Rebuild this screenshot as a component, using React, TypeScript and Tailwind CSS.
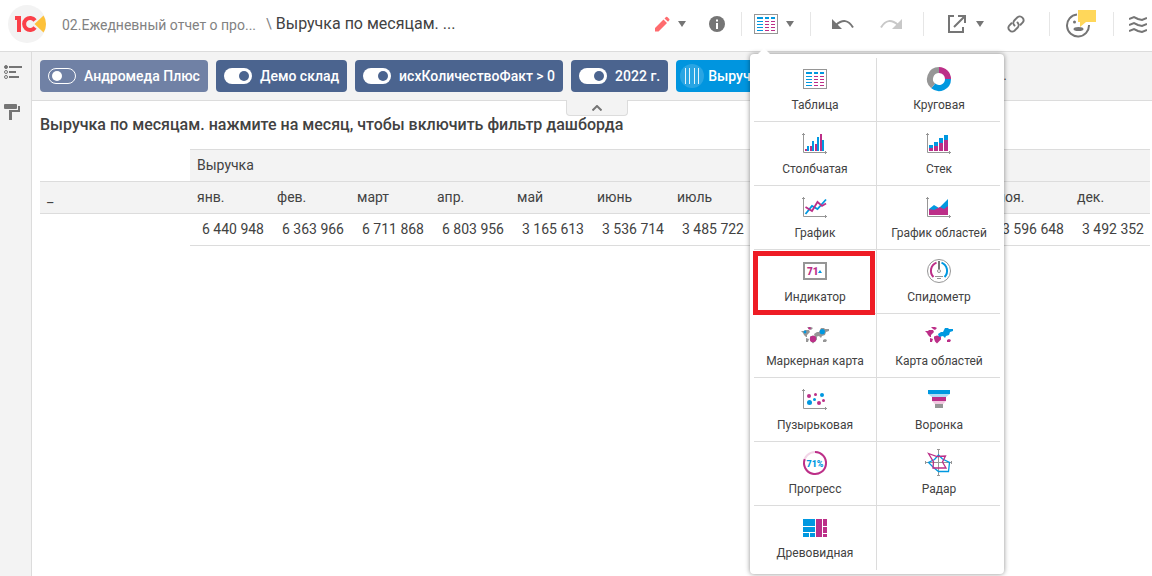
import type { ReactNode } from "react";

const GRAY = "#969696";
const BLUE = "#0098e0";
const PINK = "#bc2f88";

const months = [
  { name: "янв.", value: "6 440 948" },
  { name: "фев.", value: "6 363 966" },
  { name: "март", value: "6 711 868" },
  { name: "апр.", value: "6 803 956" },
  { name: "май", value: "3 165 613" },
  { name: "июнь", value: "3 536 714" },
  { name: "июль", value: "3 485 722" },
  { name: "", value: "" },
  { name: "", value: "" },
  { name: "", value: "" },
  { name: "ноя.", value: "3 596 648" },
  { name: "дек.", value: "3 492 352" },
];

const filters = [
  { label: "Андромеда Плюс", on: false },
  { label: "Демо склад", on: true },
  { label: "исхКоличествоФакт > 0", on: true },
  { label: "2022 г.", on: true },
];

function Icon({ children }: { children: ReactNode }) {
  return (
    <svg viewBox="0 0 26 26" className="h-[26px] w-[26px] shrink-0 overflow-visible" fill="none" aria-hidden>
      {children}
    </svg>
  );
}

function Axes() {
  return <path d="M1.5 3v19.5H25M0 4.5h3M23.5 21v3" stroke={GRAY} />;
}

function TableIcon() {
  return (
    <Icon>
      <rect x="1.5" y="3.5" width="23" height="19" stroke={GRAY} />
      <path d="M4 7h6M12 7h4M18 7h4" stroke={BLUE} strokeWidth="2" />
      <path d="M4 10.5h6M4 13.5h6M4 16.5h6M4 19.5h6" stroke={BLUE} />
      <path d="M12 10.5h4m2 0h4M12 13.5h4m2 0h4M12 16.5h4m2 0h4M12 19.5h4m2 0h4" stroke={PINK} />
    </Icon>
  );
}

function PieIcon() {
  return (
    <Icon>
      <g strokeWidth="6">
        <path d="M13 4a9 9 0 0 1 9 9" stroke={PINK} />
        <path d="M22 13a9 9 0 0 1-14.8 6.9" stroke={BLUE} />
        <path d="M7.2 19.9A9 9 0 0 1 13 4" stroke={GRAY} />
      </g>
    </Icon>
  );
}

function BarsIcon() {
  return (
    <Icon>
      <Axes />
      <path d="M3 19h2v2H3zM8 16h2v5H8zM13 14h2v7h-2zM18 4h2v17h-2z" fill={PINK} />
      <path d="M5 16h2v5H5zM10 11h2v10h-2zM15 7h2v14h-2zM20 10h2v11h-2z" fill={BLUE} />
    </Icon>
  );
}

function StackIcon() {
  return (
    <Icon>
      <Axes />
      <path d="M3 15h4v3H3zM8 12h4v4H8zM13 8h4v5h-4zM18 5h4v5h-4z" fill={BLUE} />
      <path d="M3 18h4v3H3zM8 16h4v5H8zM13 13h4v8h-4zM18 10h4v11h-4z" fill={PINK} />
    </Icon>
  );
}

function LineIcon() {
  return (
    <Icon>
      <Axes />
      <path d="M3.5 20l6.5-8 5.5 3L24 5.5" stroke={BLUE} strokeWidth="1.8" />
      <path d="M3.5 13l6.5 4 5.5-9 4.5 4 4-2.5" stroke={PINK} strokeWidth="1.8" />
    </Icon>
  );
}

function AreaIcon() {
  return (
    <Icon>
      <Axes />
      <path d="M3 21v-6l5-4 5 3 9-9v16z" fill={BLUE} />
      <path d="M3 21v-6l5 1 6-3 4 2 4-3v9z" fill={PINK} />
    </Icon>
  );
}

function IndicatorIcon() {
  return (
    <Icon>
      <rect x="2" y="5" width="22" height="16" stroke={GRAY} strokeWidth="2" />
      <text x="5" y="17" fontSize="10" fontWeight="900" fill={PINK}>71</text>
      <path d="M16 15l2-3 2 3z" fill={BLUE} />
    </Icon>
  );
}

function GaugeIcon() {
  return (
    <Icon>
      <circle cx="13" cy="13" r="11.5" stroke={GRAY} />
      <path d="M7.5 19A8.8 8.8 0 0 1 10.5 4.6" stroke={PINK} strokeWidth="2" />
      <path d="M18.5 19A8.8 8.8 0 0 0 15.5 4.6" stroke={BLUE} strokeWidth="2" />
      <path d="M13 3v8" stroke="#777" strokeWidth="2" />
      <circle cx="13" cy="13" r="1.5" stroke={GRAY} />
      <path d="M9 18.5h8M11 20.5h4" stroke={GRAY} />
    </Icon>
  );
}

const WEST =
  "M-1 9h3l1-1h4l1 2-3 3v2H4l-2-2-1-2zM5 5h4l2 1-2 2-2-1zM4 16l3 1-1 3H4zM8 14.5l3-1 4 1v3l-2 2-2 2-2-2-1-3z";
const EAST = "M12 12l3-2h2l2-4h3l1 1h4v2l-3 1-1 3-3 1-1 2-2-2-4 1z";
const AUSTRALIA = "M21 18l2-1 2 1-1 2h-3z";

function MarkerMapIcon() {
  return (
    <Icon>
      <path d={WEST + EAST + AUSTRALIA} fill={GRAY} />
      <circle cx="11" cy="17" r="3.2" fill={PINK} />
      <circle cx="7.5" cy="6.2" r="1.2" fill={PINK} />
      <circle cx="20.3" cy="9.7" r="2.6" fill={BLUE} />
      <circle cx="3" cy="10" r="1.4" fill={BLUE} />
    </Icon>
  );
}

function AreaMapIcon() {
  return (
    <Icon>
      <path d={WEST + AUSTRALIA} fill={PINK} />
      <path d={EAST} fill={BLUE} />
    </Icon>
  );
}

function BubbleIcon() {
  return (
    <Icon>
      <Axes />
      <g fill={PINK}>
        <circle cx="7" cy="10" r="2" />
        <circle cx="13.5" cy="8.5" r="1.5" />
        <circle cx="17" cy="17" r="2" />
        <circle cx="21.5" cy="14.5" r="1.5" />
      </g>
      <g fill={BLUE}>
        <circle cx="7.5" cy="16.5" r="2.5" />
        <circle cx="12.5" cy="13.5" r="1.5" />
        <circle cx="20" cy="9" r="2" />
      </g>
    </Icon>
  );
}

function FunnelIcon() {
  return (
    <Icon>
      <path d="M2 4h22v4H2z" fill={BLUE} />
      <path d="M2 8h22l-4 3H6z" fill="#b0dcf4" />
      <path d="M6 11h14v4H6z" fill={PINK} />
      <path d="M6 15h14l-3 3H9z" fill="#f0c8e0" />
      <path d="M9 18h8v4H9z" fill={GRAY} />
    </Icon>
  );
}

function ProgressIcon() {
  return (
    <Icon>
      <circle cx="13" cy="13" r="11" stroke="#f2d5e7" strokeWidth="2" />
      <path d="M13 2A11 11 0 1 1 2.7 9.2" stroke={PINK} strokeWidth="2" />
      <text x="13" y="16.5" fontSize="9" fontWeight="900" textAnchor="middle" fill={BLUE}>71%</text>
    </Icon>
  );
}

function RadarIcon() {
  return (
    <Icon>
      <path d="M-1 12.5h27M12.5-1v27M-.5 11v3M25.5 11v3M11-.5h3M11 25.5h3" stroke={GRAY} />
      <path d="M12.5 5l4 4 7 3.5-1 9h-10l-5-4-5-5 6-3z" stroke={BLUE} strokeWidth="1.3" />
      <path d="M2.5 3.5l8.5 3 8.5-.5-3 6 3.5 6H7l.5-6z" stroke={PINK} strokeWidth="1.3" />
    </Icon>
  );
}

function TreeIcon() {
  return (
    <Icon>
      <path d="M1 5h12v7H1zM1 13h12v5H1zM1 19h6v4H1zM8 19h5v4H8z" fill={BLUE} />
      <path d="M14 5h6v18h-6zM21 5h4v7h-4zM21 13h4v6h-4zM21 20h4v3h-4z" fill={PINK} />
    </Icon>
  );
}

const chartTypes = [
  { label: "Таблица", icon: <TableIcon /> },
  { label: "Круговая", icon: <PieIcon /> },
  { label: "Столбчатая", icon: <BarsIcon /> },
  { label: "Стек", icon: <StackIcon /> },
  { label: "График", icon: <LineIcon /> },
  { label: "График областей", icon: <AreaIcon /> },
  { label: "Индикатор", icon: <IndicatorIcon />, marked: true },
  { label: "Спидометр", icon: <GaugeIcon /> },
  { label: "Маркерная карта", icon: <MarkerMapIcon /> },
  { label: "Карта областей", icon: <AreaMapIcon /> },
  { label: "Пузырьковая", icon: <BubbleIcon /> },
  { label: "Воронка", icon: <FunnelIcon /> },
  { label: "Прогресс", icon: <ProgressIcon /> },
  { label: "Радар", icon: <RadarIcon /> },
  { label: "Древовидная", icon: <TreeIcon /> },
];

function ChartMenu() {
  return (
    <div className="absolute top-[43px] -left-[3px] z-20 w-[254px] rounded bg-white p-1 shadow-[0_0_5px_rgba(0,0,0,0.45)]">
      <svg viewBox="0 0 14 7" className="absolute -top-[6px] left-[7px] h-[7px] w-[14px]" aria-hidden>
        <path d="M0 7l7-7 7 7z" fill="#fff" />
      </svg>
      <ul className="grid grid-cols-2">
        {chartTypes.map((type) => (
          <li
            key={type.label}
            className="relative h-16 border-[#dcdcdc] odd:border-r even:pl-px not-last:border-b"
          >
            <button type="button" className="flex w-full flex-col items-center pt-2">
              {type.icon}
              <span className="mt-1 text-xs leading-[18px] whitespace-nowrap">{type.label}</span>
            </button>
            {type.marked && (
              <span className="absolute top-px right-px -bottom-[2px] -left-px z-10 border-[5px] border-[#ee1c25]" />
            )}
          </li>
        ))}
      </ul>
    </div>
  );
}

function Caret() {
  return (
    <svg viewBox="0 0 8 6" className="h-[6px] w-2" aria-hidden>
      <path d="M0 0h8L4 6z" fill="#757575" />
    </svg>
  );
}

function Divider() {
  return <div className="h-6 w-px bg-[#e6e6e6]" />;
}

function Switch({ on }: { on: boolean }) {
  return on ? (
    <span className="flex h-4 w-7 items-center justify-end rounded-full bg-white pr-[3px]">
      <span className="h-[10px] w-[10px] rounded-full bg-[#4b648f]" />
    </span>
  ) : (
    <span className="flex h-4 w-7 items-center rounded-full border border-white pl-[3px]">
      <span className="h-[10px] w-[10px] rounded-full bg-white" />
    </span>
  );
}

function Header() {
  return (
    <header className="flex h-[52px] items-center border-b border-[#dcdcdc] bg-white pb-[3px] pl-2">
      <a href="#" aria-label="1С" className="shrink-0">
        <svg viewBox="0 0 38 38" className="h-[38px] w-[38px]" fill="none">
          <circle cx="19" cy="19" r="19" fill="#f3f3f3" />
          <path d="M7 13h4v14" stroke="#fb4049" strokeWidth="4" />
          <path d="M27 15.5a6 6 0 1 0 0 7" stroke="#fb4049" strokeWidth="4" />
          <path d="M26.5 19l9-8.5Q38 14 38 19t-2.5 8.5z" fill="#fdc13a" />
        </svg>
      </a>
      <nav className="ml-4 flex items-center whitespace-nowrap">
        <a href="#" className="w-[193px] pt-0.5 text-sm text-[#828282]">02.Ежедневный отчет о про...</a>
        <span className="ml-[11px] text-sm text-[#828282]">\</span>
        <h1 className="ml-1 text-base">Выручка по месяцам. ...</h1>
      </nav>
      <div className="ml-auto flex shrink-0 items-center">
        <button type="button" aria-label="Редактировать" className="mr-2">
          <svg viewBox="0 0 16 16" className="h-4 w-4" fill="#ff6b6e">
            <path d="M1 12l8.5-8.5L13 7l-8.500 8.500H1zM10.500 2.500L12 1q.7-.5 1.300 0l2 2q.5.700 0 1.300L14 5.800z" />
          </svg>
        </button>
        <Caret />
        <button type="button" aria-label="Информация" className="ml-[23px]">
          <svg viewBox="0 0 16 16" className="h-4 w-4">
            <circle cx="8" cy="8" r="8" fill="#757575" />
            <path d="M7 3.5h2v2H7zM7 7h2v6H7z" fill="#fff" />
          </svg>
        </button>
        <div className="ml-4"><Divider /></div>
        <div className="relative ml-[11px] flex items-center">
          <button type="button" aria-label="Тип диаграммы"><TableIcon /></button>
          <ChartMenu />
        </div>
        <div className="mr-4 ml-[7px]"><Caret /></div>
        <Divider />
        <button type="button" aria-label="Отменить" className="ml-[21px]">
          <svg viewBox="0 0 22 12" className="h-3 w-[22px]" fill="none">
            <path d="M0 1v10h10z" fill="#757575" />
            <path d="M4 7Q14-2 21 9.5" stroke="#757575" strokeWidth="2" />
          </svg>
        </button>
        <button type="button" aria-label="Повторить" className="mr-[21px] ml-[26px]">
          <svg viewBox="0 0 22 12" className="h-3 w-[22px]" fill="none">
            <path d="M22 1v10H12z" fill="#c8c8c8" />
            <path d="M18 7Q8-2 1 9.5" stroke="#c8c8c8" strokeWidth="2" />
          </svg>
        </button>
        <Divider />
        <button type="button" aria-label="Открыть" className="mr-[10px] ml-6">
          <svg viewBox="0 0 18 18" className="h-[18px] w-[18px]" fill="none" stroke="#757575" strokeWidth="2">
            <path d="M6 1H1v16h14v-5M10 1h7v7M17 1L6 12" />
          </svg>
        </button>
        <Caret />
        <button type="button" aria-label="Ссылка" className="mr-6 ml-[23px]">
          <svg viewBox="0 0 24 24" className="h-[18px] w-[18px]" fill="none" stroke="#757575" strokeWidth="2.5" strokeLinecap="round">
            <path d="M10 14a5 5 0 0 1 0-7l4-4a5 5 0 0 1 7 7l-3 3M14 10a5 5 0 0 1 0 7l-4 4a5 5 0 0 1-7-7l3-3" />
          </svg>
        </button>
        <Divider />
        <button type="button" aria-label="Обратная связь" className="mr-[17px] ml-4">
          <svg viewBox="0 0 30 28" className="h-7 w-[30px]" fill="none">
            <path d="M11 4.5A11 11 0 1 0 23 15" stroke="#757575" strokeWidth="2" />
            <circle cx="8.5" cy="12" r="1.5" fill="#757575" />
            <ellipse cx="12.5" cy="19" rx="5" ry="2" fill="#757575" />
            <path d="M12 0h18v12H20l-6 5v-5h-2z" fill="#ffd75a" />
          </svg>
        </button>
        <Divider />
        <button type="button" aria-label="Меню" className="mr-[5px] ml-[15px]">
          <svg viewBox="0 0 18 18" className="h-[18px] w-[18px]" fill="none" stroke="#757575" strokeWidth="2">
            <path d="M0 4l5-2 4 2 4 1 5-2M0 10l5-2 4 2 4 1 5-2M0 16l5-2 4 2 4 1 5-2" />
          </svg>
        </button>
      </div>
    </header>
  );
}

function Sidebar() {
  return (
    <aside className="flex w-8 shrink-0 flex-col border-r border-[#dcdcdc] bg-[#f3f3f3] pt-3 pl-1">
      <button type="button" aria-label="Структура">
        <svg viewBox="0 0 18 16" className="h-4 w-[18px]" fill="none" stroke="#757575">
          <circle cx="2" cy="3" r="1.5" fill="#757575" />
          <circle cx="2" cy="8" r="1.5" />
          <circle cx="2" cy="13" r="1.5" />
          <path d="M5 3h13M5 8h7M5 13h10" strokeWidth="2" />
        </svg>
      </button>
      <button type="button" aria-label="Оформление" className="mt-6">
        <svg viewBox="0 0 18 16" className="h-4 w-[18px]" fill="#757575">
          <rect width="13" height="5" rx="1" />
          <path d="M14 2h2v6H8v8H5V6h9z" />
        </svg>
      </button>
    </aside>
  );
}

export default function App() {
  return (
    <div className="flex min-h-dvh flex-col overflow-hidden bg-white font-['Roboto',sans-serif] text-[#424242]">
      <Header />
      <div className="flex flex-1">
        <Sidebar />
        <main className="min-w-0 flex-1">
          {/* Filters */}
          <div className="relative flex h-[49px] items-start gap-2 border-b border-[#dcdcdc] bg-[#f3f3f3] px-2 pt-2">
            {filters.map((filter) => (
              <button
                key={filter.label}
                type="button"
                aria-pressed={filter.on}
                className={`flex h-8 shrink-0 items-center gap-2 rounded px-2 text-sm font-medium whitespace-nowrap text-white ${
                  filter.on ? "bg-[#4b648f]" : "bg-[#7081a5]"
                }`}
              >
                <Switch on={filter.on} />
                {filter.label}
              </button>
            ))}
            <button
              type="button"
              className="flex h-8 w-[313px] shrink-0 items-center gap-1 rounded bg-[#0095df] pr-2 pl-1 text-sm font-medium text-white"
            >
              <svg viewBox="0 0 24 24" className="h-6 w-6" aria-hidden>
                <circle cx="12" cy="12" r="12" fill="#29a5e3" />
                <path d="M5.5 4v16M9.5 4v16M14.5 4v16M18.5 4v16" stroke="#e5f4fc" />
              </svg>
              Выручка
            </button>
            <button type="button" className="h-8 text-xs">...</button>
            <button
              type="button"
              aria-label="Свернуть фильтры"
              className="absolute top-12 left-[534px] flex h-4 w-[62px] items-center justify-center rounded-b border border-t-0 border-[#dcdcdc] bg-[#f3f3f3]"
            >
              <svg viewBox="0 0 10 6" className="h-[6px] w-[10px]" fill="none">
                <path d="M.5 5.5L5 1l4.5 4.5" stroke="#757575" strokeWidth="2" />
              </svg>
            </button>
          </div>

          {/* Report */}
          <div className="pl-2">
            <h2 className="pt-3 pb-3 text-base font-medium">
              Выручка по месяцам. нажмите на месяц, чтобы включить фильтр дашборда
            </h2>
            <table className="w-[1110px] table-fixed border-collapse text-left text-sm">
              <colgroup>
                <col className="w-[150px]" />
              </colgroup>
              <thead>
                <tr className="h-8">
                  <td />
                  <th colSpan={12} className="border-t border-[#dcdcdc] bg-[#f3f3f3] px-[7px] pb-0.5 font-normal">
                    Выручка
                  </th>
                </tr>
                <tr className="h-8 border-y border-[#dcdcdc] bg-[#f3f3f3]">
                  <th className="px-[7px] pb-0.5 font-normal">_</th>
                  {months.map((month, i) => (
                    <th key={i} className="px-[7px] pb-0.5 font-normal">{month.name}</th>
                  ))}
                </tr>
              </thead>
              <tbody>
                <tr className="h-8">
                  <td />
                  {months.map((month, i) => (
                    <td key={i} className="border-b border-[#dcdcdc] px-[6px] pb-0.5 text-right whitespace-nowrap">
                      {month.value}
                    </td>
                  ))}
                </tr>
              </tbody>
            </table>
          </div>
        </main>
      </div>
    </div>
  );
}
